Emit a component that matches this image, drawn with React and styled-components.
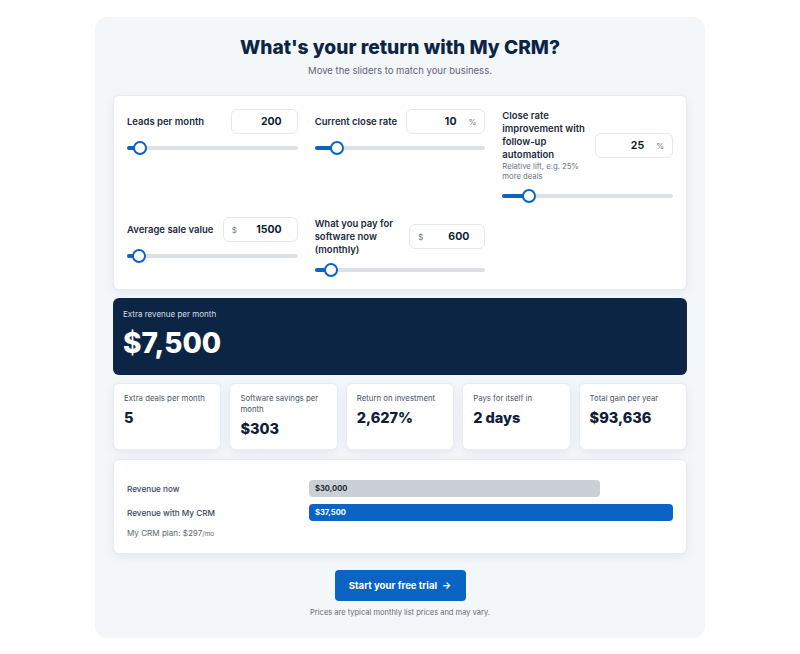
import React from 'react';
import styled, { createGlobalStyle } from 'styled-components';

const GlobalStyle = createGlobalStyle`
  body {
    margin: 0;
    background: #ffffff;
    font-family: Inter, "Noto Sans", "Liberation Sans", sans-serif;
    color: #13253b;
  }
`;

const BLUE = '#0b63c4';
const NAVY = '#0c2544';

const Panel = styled.section`
  width: 610px;
  box-sizing: border-box;
  margin: 17px auto 0;
  padding: 16px 18px 20px;
  background: #f4f7fa;
  border-radius: 12px;
`;

const Title = styled.h1`
  margin: 0;
  text-align: center;
  font-size: 19.2px;
  line-height: 28px;
  font-weight: 800;
  color: ${NAVY};
`;

const Subtitle = styled.p`
  margin: 2px 0 0;
  text-align: center;
  font-size: 9.5px;
  line-height: 16px;
  color: #5b6676;
`;

const Card = styled.div`
  background: #ffffff;
  border: 1px solid #e7ecf1;
  border-radius: 6px;
  box-shadow: 0 3px 10px rgba(20, 40, 70, 0.07);
  box-sizing: border-box;
`;

const InputsCard = styled(Card)`
  margin-top: 16px;
  padding: 13px 13px 12px;
  display: grid;
  grid-template-columns: repeat(3, 1fr);
  column-gap: 17px;
  row-gap: 14px;
  align-items: start;
`;

const Field = styled.div`
  display: flex;
  flex-direction: column;
`;

const FieldHead = styled.div`
  display: flex;
  align-items: center;
  justify-content: space-between;
  gap: 8px;
`;

const LabelBlock = styled.div`
  flex: 1;
  min-width: 0;
`;

const Label = styled.div`
  font-size: 9.5px;
  line-height: 13px;
  font-weight: 600;
  color: #1c2a3c;
`;

const Hint = styled.div`
  margin-top: 1px;
  font-size: 7.7px;
  line-height: 10px;
  color: #6b7583;
`;

const ValueBox = styled.div`
  flex: none;
  width: ${(p) => p.$width}px;
  height: 25px;
  box-sizing: border-box;
  display: flex;
  align-items: center;
  padding: 0 8px;
  border: 1px solid #e4e9ef;
  border-radius: 6px;
  background: #ffffff;
`;

const Affix = styled.span`
  font-size: 8px;
  color: #6b7583;
`;

const Value = styled.span`
  flex: 1;
  text-align: right;
  padding-right: ${(p) => (p.$suffix ? 12 : 7)}px;
  font-size: 10.5px;
  font-weight: 700;
  color: #0f1d2e;
`;

const Track = styled.div`
  position: relative;
  margin-top: 7px;
  height: 14px;
  &::before {
    content: '';
    position: absolute;
    left: 0;
    right: 0;
    top: 5px;
    height: 4px;
    border-radius: 2px;
    background: #dde1e6;
  }
`;

const Fill = styled.div`
  position: absolute;
  left: 0;
  top: 5px;
  height: 4px;
  border-radius: 2px;
  background: ${BLUE};
`;

const Thumb = styled.div`
  position: absolute;
  top: 0;
  width: 14px;
  height: 14px;
  margin-left: -7px;
  box-sizing: border-box;
  border-radius: 50%;
  border: 2.5px solid ${BLUE};
  background: #ffffff;
`;

const Hero = styled.div`
  margin-top: 8px;
  padding: 10px 10px 14px;
  border-radius: 6px;
  background: ${NAVY};
`;

const HeroLabel = styled.div`
  font-size: 8px;
  line-height: 12px;
  color: #d5dde8;
`;

const HeroValue = styled.div`
  margin-top: 5px;
  font-size: 28px;
  line-height: 36px;
  font-weight: 800;
  color: #ffffff;
`;

const Stats = styled.div`
  margin-top: 8px;
  display: grid;
  grid-template-columns: repeat(5, 1fr);
  gap: 8px;
`;

const StatCard = styled(Card)`
  min-height: 67px;
  padding: 9px 10px 10px;
`;

const StatLabel = styled.div`
  font-size: 7.8px;
  line-height: 11px;
  color: #4a5564;
`;

const StatValue = styled.div`
  margin-top: 4px;
  font-size: 14.5px;
  line-height: 20px;
  font-weight: 800;
  color: #0f2036;
`;

const Compare = styled(Card)`
  margin-top: 9px;
  padding: 20px 13px 14px;
`;

const BarRow = styled.div`
  display: grid;
  grid-template-columns: 1fr 2fr;
  align-items: center;
  & + & {
    margin-top: 7px;
  }
`;

const BarLabel = styled.div`
  font-size: 8.2px;
  color: #3b4757;
  font-weight: 500;
`;

const Bar = styled.div`
  height: 17px;
  border-radius: 4px;
  display: flex;
  align-items: center;
  padding-left: 6px;
  box-sizing: border-box;
  font-size: 7.6px;
  font-weight: 700;
  background: ${(p) => (p.$accent ? BLUE : '#cbd0d6')};
  color: ${(p) => (p.$accent ? '#ffffff' : '#1e2a38')};
`;

const Plan = styled.div`
  margin-top: 7px;
  font-size: 8.1px;
  line-height: 10px;
  color: #5b6676;
  small {
    font-size: 6.5px;
  }
`;

const Footer = styled.div`
  margin-top: 16px;
  display: flex;
  flex-direction: column;
  align-items: center;
`;

const TrialButton = styled.button`
  width: 131px;
  height: 31px;
  border: none;
  border-radius: 4px;
  background: ${BLUE};
  color: #ffffff;
  font-family: inherit;
  font-size: 9.6px;
  font-weight: 700;
  cursor: pointer;
`;

const Arrow = styled.span`
  margin-left: 5px;
`;

const Note = styled.div`
  margin-top: 7px;
  font-size: 7.5px;
  line-height: 10px;
  color: #5f6a78;
`;

const fields = [
  { label: 'Leads per month', value: 200, min: 0, max: 5000, width: 67 },
  { label: 'Current close rate', value: 10, min: 0, max: 100, width: 79, suffix: '%' },
  {
    label: 'Close rate improvement with follow-up automation',
    hint: 'Relative lift, e.g. 25% more deals',
    value: 25,
    min: 0,
    max: 200,
    width: 78,
    suffix: '%',
  },
  { label: 'Average sale value', value: 1500, min: 0, max: 50000, width: 75, prefix: '$' },
  { label: 'What you pay for software now (monthly)', value: 600, min: 0, max: 10000, width: 76, prefix: '$' },
];

const Slider = ({ value, min, max }) => {
  const pct = (value - min) / (max - min);
  const left = `calc(7px + ${pct} * (100% - 14px))`;
  return (
    <Track>
      <Fill style={{ width: left }} />
      <Thumb style={{ left }} />
    </Track>
  );
};

const InputField = ({ label, hint, value, min, max, width, prefix, suffix }) => (
  <Field>
    <FieldHead>
      <LabelBlock>
        <Label>{label}</Label>
        {hint && <Hint>{hint}</Hint>}
      </LabelBlock>
      <ValueBox $width={width}>
        {prefix && <Affix>{prefix}</Affix>}
        <Value $suffix={!!suffix}>{value}</Value>
        {suffix && <Affix>{suffix}</Affix>}
      </ValueBox>
    </FieldHead>
    <Slider value={value} min={min} max={max} />
  </Field>
);

const stats = [
  { label: 'Extra deals per month', value: '5' },
  { label: 'Software savings per month', value: '$303' },
  { label: 'Return on investment', value: '2,627%' },
  { label: 'Pays for itself in', value: '2 days' },
  { label: 'Total gain per year', value: '$93,636' },
];

const App = () => (
  <>
    <GlobalStyle />
    <Panel>
      <Title>What's your return with My CRM?</Title>
      <Subtitle>Move the sliders to match your business.</Subtitle>

      <InputsCard>
        {fields.map((f) => (
          <InputField key={f.label} {...f} />
        ))}
      </InputsCard>

      <Hero>
        <HeroLabel>Extra revenue per month</HeroLabel>
        <HeroValue>$7,500</HeroValue>
      </Hero>

      <Stats>
        {stats.map((s) => (
          <StatCard key={s.label}>
            <StatLabel>{s.label}</StatLabel>
            <StatValue>{s.value}</StatValue>
          </StatCard>
        ))}
      </Stats>

      <Compare>
        <BarRow>
          <BarLabel>Revenue now</BarLabel>
          <Bar style={{ width: `${(30000 / 37500) * 100}%` }}>$30,000</Bar>
        </BarRow>
        <BarRow>
          <BarLabel>Revenue with My CRM</BarLabel>
          <Bar $accent>$37,500</Bar>
        </BarRow>
        <Plan>
          My CRM plan: $297<small>/mo</small>
        </Plan>
      </Compare>

      <Footer>
        <TrialButton>
          Start your free trial<Arrow>→</Arrow>
        </TrialButton>
        <Note>Prices are typical monthly list prices and may vary.</Note>
      </Footer>
    </Panel>
  </>
);

export default App;
